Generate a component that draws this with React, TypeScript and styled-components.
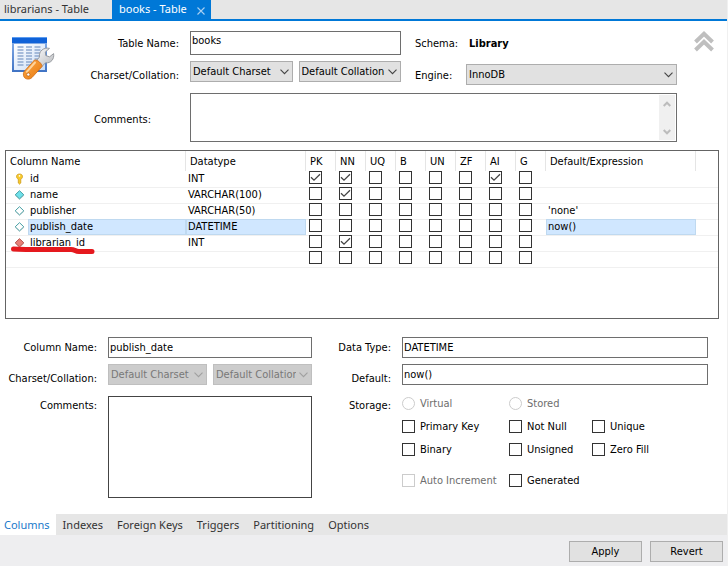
import React from "react";
import styled, { createGlobalStyle, css } from "styled-components";

const GlobalStyle = createGlobalStyle`
  *, *::before, *::after { box-sizing: border-box; }
  body {
    margin: 0;
    background: #f0f0f0;
    color: #000;
    font: 11px/13px "DejaVu Sans Condensed", "Noto Sans", sans-serif;
  }
  button, input, select, textarea { font: inherit; color: inherit; margin: 0; border-radius: 0; }
`;

const Page = styled.main`
  display: flex;
  flex-direction: column;
  min-height: 100vh;
  padding-right: 1px;
`;

/* ---------- editor tabs ---------- */

const EditorTabs = styled.nav`
  display: flex;
  height: 21px;
  background: #e6e6e6;
  border-bottom: 2px solid #0078d7;
  font-family: "Noto Sans", sans-serif;
`;

const EditorTab = styled.div<{ $active?: boolean }>`
  display: flex;
  align-items: center;
  gap: 10px;
  height: 19px;
  padding: 0 5px 2px ${(p) => (p.$active ? "7px" : "4px")};
  min-width: ${(p) => (p.$active ? "99px" : "112px")};
  background: ${(p) => (p.$active ? "#0078d7" : "transparent")};
  color: ${(p) => (p.$active ? "#fff" : "#333")};
`;

const PlainButton = styled.button`
  display: flex;
  padding: 0;
  border: 0;
  background: none;
  white-space: nowrap;
`;

const CloseButton = styled(PlainButton)`
  padding-top: 4px;
`;

/* ---------- shared form parts ---------- */

const fieldBorder = css`
  border: 1px solid #6e6e6e;
  background: #fff;
  outline: none;
`;

const Label = styled.label<{ $top?: number }>`
  align-self: ${(p) => (p.$top ? "start" : "center")};
  padding-top: ${(p) => p.$top ?? 0}px;
  text-align: right;
  white-space: nowrap;
`;

const TextInput = styled.input<{ $tall?: boolean }>`
  ${fieldBorder}
  width: 100%;
  min-width: 0;
  height: ${(p) => (p.$tall ? "24px" : "21px")};
  padding: 0 1px ${(p) => (p.$tall ? "5px" : "1px")};
`;

const Pair = styled.div`
  display: grid;
  grid-template-columns: 1fr 1fr;
  gap: 6px;
  align-self: start;
`;

const SelectBox = styled.div<{ $end?: boolean }>`
  position: relative;
  align-self: ${(p) => (p.$end ? "end" : "start")};
  min-width: 0;
  & > svg {
    position: absolute;
    right: 4px;
    top: 8px;
    pointer-events: none;
  }
`;

const Select = styled.select`
  appearance: none;
  display: block;
  width: 100%;
  height: 21px;
  padding: 0 15px 0 2px;
  border: 1px solid #adadad;
  background: #e1e1e1;
  outline: none;
  text-overflow: clip;
  &:disabled {
    opacity: 1;
    color: #787878;
    border-color: #bfbfbf;
    background: #ccc;
  }
`;

function Dropdown(props: { label: string; value: string; disabled?: boolean; end?: boolean; id?: string }) {
  return (
    <SelectBox $end={props.end}>
      <Select id={props.id} aria-label={props.label} disabled={props.disabled} defaultValue={props.value}>
        <option>{props.value}</option>
      </Select>
      <svg width="9" height="6" viewBox="0 0 9 6" fill="none" stroke={props.disabled ? "#a0a0a0" : "#444"} strokeWidth="1.1">
        <path d="M.5 .7 4.5 4.7 8.5 .7" />
      </svg>
    </SelectBox>
  );
}

const checkMark = `url("data:image/svg+xml,%3Csvg xmlns='http://www.w3.org/2000/svg' viewBox='0 0 11 11'%3E%3Cpath d='M1 5.2 4 8.2 10 2.2' fill='none' stroke='%23444' stroke-width='1.3'/%3E%3C/svg%3E")`;

const Tick = styled.input`
  appearance: none;
  display: block;
  flex: none;
  width: 13px;
  height: 13px;
  border: 1px solid #333;
  border-radius: ${(p) => (p.type === "radio" ? "50%" : "0")};
  background: #fff;
  &:checked { background: #fff ${checkMark} center / 11px 11px no-repeat; }
  &:disabled { border-color: #ccc; }
`;

/* ---------- table header form ---------- */

const HeaderForm = styled.section`
  display: flex;
  padding: 10px 13px 8px 11px;
  background: #fff;
`;

const TableIconBox = styled.div`
  flex: none;
  width: 44px;
  padding-top: 4px;
`;

const HeaderFields = styled.div`
  flex: 1;
  display: grid;
  grid-template-columns: 135px minmax(0, 1fr) 65px minmax(0, 1fr);
  grid-template-rows: 24px 24px auto;
  row-gap: 6px;
  margin-right: 17px;
`;

const LabelCell = styled.div<{ $inset?: boolean }>`
  display: flex;
  align-items: center;
  justify-content: flex-end;
  padding-right: ${(p) => (p.$inset ? "39px" : "11px")};
`;

const LowerLabelCell = styled(LabelCell)`
  padding-top: 5px;
`;

const SideLabelCell = styled.div<{ $low?: boolean }>`
  display: flex;
  align-items: center;
  padding-top: ${(p) => (p.$low ? "5px" : "0")};
  padding-left: 14px;
`;

const SchemaName = styled.output`
  align-self: center;
  padding-left: 3px;
  font-weight: bold;
`;

const CommentBox = styled.div`
  ${fieldBorder}
  grid-column: 2 / -1;
  display: flex;
  height: 49px;
  margin-top: 2px;
  padding: 1px;
`;

const CommentInput = styled.textarea`
  flex: 1;
  min-width: 0;
  border: 0;
  outline: none;
  resize: none;
  overflow: hidden;
`;

const ScrollTrack = styled.div`
  display: flex;
  flex-direction: column;
  justify-content: space-between;
  align-items: center;
  width: 16px;
  padding: 6px 0 5px;
  background: #f0f0f0;
`;

/* ---------- columns table ---------- */

const TableFrame = styled.section`
  padding: 0 8px 0 5px;
  background: #fff;
`;

const TablePane = styled.div`
  min-height: 169px;
  border: 1px solid #646464;
`;

const ColumnsTable = styled.table`
  width: 100%;
  table-layout: fixed;
  border-collapse: separate;
  border-spacing: 0;
`;

const HeadCell = styled.th<{ $last?: boolean }>`
  height: 20px;
  padding: 0 0 0 4px;
  border-right: ${(p) => (p.$last ? "0" : "1px solid #e5e5e5")};
  font-weight: normal;
  text-align: left;
`;

const BodyRow = styled.tr`
  height: 16px;
  &:not(:first-child) { box-shadow: inset 0 1px #f0f0f0; }
  &:last-child { box-shadow: inset 0 1px #f0f0f0, 0 1px #f0f0f0; }
`;

const Cell = styled.td<{ $selected?: boolean }>`
  height: 16px;
  padding: 0 2px;
  line-height: 16px;
  white-space: nowrap;
  ${(p) =>
    p.$selected &&
    css`
      background: #d0e7ff;
      box-shadow: inset 0 0 0 1px #bfd9f0;
    `}
`;

const IconCell = styled.td`
  position: relative;
  padding: 0 0 0 8px;
  & > svg { display: block; }
`;

const TickCell = styled.td`
  padding: 0 0 0 3px;
  vertical-align: top;
`;

const RedMark = styled.svg`
  position: absolute;
  left: 3px;
  top: 8px;
  z-index: 1;
`;

/* ---------- column details form ---------- */

const DetailForm = styled.section`
  flex: 1;
  display: grid;
  grid-template-columns: 97px minmax(0, 204fr) 68px minmax(0, 306fr);
  grid-template-rows: 21px 21px 1fr;
  gap: 6px 11px;
  padding: 18px 19px 16px 0;
  background: #fff;
`;

const DetailComment = styled.textarea`
  ${fieldBorder}
  display: block;
  width: 100%;
  height: 102px;
  margin-top: 5px;
  border-color: #444;
  resize: none;
`;

const Flags = styled.div`
  display: grid;
  grid-template-columns: 107px 83px auto;
  grid-template-rows: repeat(3, 13px) 21px;
  justify-content: start;
  row-gap: 10px;
  padding-top: 6px;
`;

const Flag = styled.label<{ $column: number; $disabled?: boolean }>`
  grid-column: ${(p) => p.$column};
  display: flex;
  align-items: center;
  align-self: end;
  gap: 5px;
  white-space: nowrap;
  color: ${(p) => (p.$disabled ? "#6d6d6d" : "#000")};
`;

/* ---------- bottom bars ---------- */

const PageTabs = styled.nav`
  display: flex;
  height: 21px;
  background: #e6e6e6;
  font-family: "Noto Sans", sans-serif;
`;

const PageTab = styled.button<{ $active?: boolean }>`
  padding: ${(p) => (p.$active ? "0 6px 0 4px" : "0 7px")};
  border: 0;
  text-align: left;
  background: ${(p) => (p.$active ? "#fff" : "transparent")};
  color: ${(p) => (p.$active ? "#1979ca" : "#333")};
`;

const Footer = styled.footer`
  display: flex;
  justify-content: flex-end;
  gap: 8px;
  height: 31px;
  padding: 6px 4px 0;
  background: #eeeef0;
`;

const PushButton = styled.button`
  width: 73px;
  height: 21px;
  padding: 0;
  border: 1px solid #adadad;
  background: #e1e1e1;
`;

/* ---------- drawings ---------- */

function TableIcon() {
  return (
    <svg width="44" height="46" viewBox="0 0 44 46" aria-hidden="true">
      <defs>
        <linearGradient id="frame" x1="0" y1="0" x2="0" y2="1">
          <stop offset="0" stopColor="#8fb5ec" />
          <stop offset="1" stopColor="#3f73c4" />
        </linearGradient>
        <linearGradient id="sheet" x1="0" y1="0" x2="1" y2="1">
          <stop offset="0" stopColor="#fff" />
          <stop offset="1" stopColor="#c9dcf5" />
        </linearGradient>
        <linearGradient id="handle" x1="0" y1="0" x2="1" y2="1">
          <stop offset="0" stopColor="#ffab48" />
          <stop offset="1" stopColor="#e6780f" />
        </linearGradient>
        <linearGradient id="steel" x1="0" y1="0" x2="1" y2="1">
          <stop offset="0" stopColor="#fff" />
          <stop offset="1" stopColor="#b4b6ba" />
        </linearGradient>
      </defs>
      <rect x="1" y="2" width="35" height="35" fill="url(#frame)" />
      <rect x="1" y="2" width="35" height="6" fill="#0f62d8" />
      <rect x="1" y="2" width="35" height="1" fill="#5c9cf0" />
      <rect x="3" y="9" width="31" height="26" fill="url(#sheet)" />
      <g stroke="#8fa9cf" strokeWidth="1.4">
        {[12, 15, 18, 21, 24, 27, 30].map((y) => (
          <path key={y} d={`M6.5 ${y}h6M15 ${y}h6M23.500 ${y}h6`} />
        ))}
      </g>
      <path
        d="M38.500 13.400C33 12 27.500 16 28.500 22L23 28.500 28.500 34 34.500 27.800C40 28.500 43.500 24 42.600 18.600L38.600 21.800 34.800 20.600 34.300 17Z"
        fill="url(#steel)"
        stroke="#909398"
        strokeWidth=".9"
        strokeLinejoin="round"
      />
      <path d="M23.500 25C26.500 24.500 31 28.500 31 31.500L21 42.500C18 45.500 13 44 12.500 40.500 12 38 13 36.500 14 35.500Z" fill="url(#handle)" stroke="#cf6a10" strokeWidth=".8" />
      <path d="M24 27.500 15.800 36.800" stroke="#ffd39a" strokeWidth="2" strokeLinecap="round" />
      <circle cx="17.300" cy="39.500" r="1.600" fill="#fff" stroke="#a9530a" strokeWidth=".6" />
    </svg>
  );
}

type Kind = "key" | "filled" | "open" | "foreign";

function RowIcon({ kind }: { kind: Kind }) {
  if (kind === "key") {
    return (
      <svg width="11" height="12" viewBox="0 0 11 12" aria-label="primary key">
        <path d="M5.5 1C3.5 1 2.500 2 2.500 3.500S3.500 5.800 4.300 6.200V10L5.500 11.200 6.800 10V6.200C7.600 5.800 8.500 5 8.500 3.500S7.500 1 5.500 1Z" fill="#f7c92c" stroke="#c99410" strokeWidth=".7" />
        <circle cx="5.500" cy="2.900" r=".8" fill="#fff" />
      </svg>
    );
  }
  const fill = { filled: "#6fe0ea", open: "#fff", foreign: "#e88078" }[kind];
  const line = kind === "foreign" ? "#b5534d" : "#469fa4";
  return (
    <svg width="11" height="12" viewBox="0 0 11 12" aria-hidden="true">
      <path d="M5.500 2.500 10.300 6.500 5.500 10.800 1 6.500Z" fill="#bbb" opacity=".6" />
      <path d="M5.500 1.700 9.800 5.800 5.500 9.900 1.200 5.800Z" fill={fill} stroke={line} />
    </svg>
  );
}

/* ---------- data ---------- */

const FLAG_NAMES = ["PK", "NN", "UQ", "B", "UN", "ZF", "AI", "G"];

interface ColumnInfo {
  name: string;
  type: string;
  kind?: Kind;
  flags: string[];
  value?: string;
  selected?: boolean;
  marked?: boolean;
}

const COLUMNS: ColumnInfo[] = [
  { name: "id", type: "INT", kind: "key", flags: ["PK", "NN", "AI"] },
  { name: "name", type: "VARCHAR(100)", kind: "filled", flags: ["NN"] },
  { name: "publisher", type: "VARCHAR(50)", kind: "open", flags: [], value: "'none'" },
  { name: "publish_date", type: "DATETIME", kind: "open", flags: [], value: "now()", selected: true },
  { name: "librarian_id", type: "INT", kind: "foreign", flags: ["NN"], marked: true },
  { name: "", type: "", flags: [] },
];

const OPTIONS: { name: string; column: number; disabled?: boolean; radio?: boolean }[] = [
  { name: "Virtual", column: 1, disabled: true, radio: true },
  { name: "Stored", column: 2, disabled: true, radio: true },
  { name: "Primary Key", column: 1 },
  { name: "Not Null", column: 2 },
  { name: "Unique", column: 3 },
  { name: "Binary", column: 1 },
  { name: "Unsigned", column: 2 },
  { name: "Zero Fill", column: 3 },
  { name: "Auto Increment", column: 1, disabled: true },
  { name: "Generated", column: 2 },
];

const PAGES = ["Columns", "Indexes", "Foreign Keys", "Triggers", "Partitioning", "Options"];

export default function App() {
  return (
    <>
      <GlobalStyle />
      <Page>
        <EditorTabs>
          <EditorTab>
            <PlainButton>librarians - Table</PlainButton>
          </EditorTab>
          <EditorTab $active>
            <PlainButton>books - Table</PlainButton>
            <CloseButton aria-label="Close tab">
              <svg width="8" height="8" viewBox="0 0 8 8" stroke="#a8d0f2" strokeWidth="1.1">
                <path d="M.5 .5 7.5 7.5M7.5 .5 .5 7.5" />
              </svg>
            </CloseButton>
          </EditorTab>
        </EditorTabs>

        <HeaderForm>
          <TableIconBox>
            <TableIcon />
          </TableIconBox>
          <HeaderFields>
            <LabelCell>
              <Label htmlFor="table-name">Table Name:</Label>
            </LabelCell>
            <TextInput id="table-name" $tall defaultValue="books" />
            <SideLabelCell>
              <Label htmlFor="schema">Schema:</Label>
            </SideLabelCell>
            <SchemaName id="schema">Library</SchemaName>

            <LowerLabelCell>
              <Label htmlFor="charset">Charset/Collation:</Label>
            </LowerLabelCell>
            <Pair>
              <Dropdown id="charset" label="Charset" value="Default Charset" />
              <Dropdown label="Collation" value="Default Collation" />
            </Pair>
            <SideLabelCell $low>
              <Label htmlFor="engine">Engine:</Label>
            </SideLabelCell>
            <Dropdown id="engine" label="Engine" value="InnoDB" end />

            <LowerLabelCell $inset>
              <Label htmlFor="comments">Comments:</Label>
            </LowerLabelCell>
            <CommentBox>
              <CommentInput id="comments" />
              <ScrollTrack>
                <PlainButton aria-label="Scroll up">
                  <svg width="8" height="6" viewBox="0 0 8 6" fill="none" stroke="#bcbcbc" strokeWidth="2">
                    <path d="M.7 5 4 1.700 7.300 5" />
                  </svg>
                </PlainButton>
                <PlainButton aria-label="Scroll down">
                  <svg width="8" height="6" viewBox="0 0 8 6" fill="none" stroke="#bcbcbc" strokeWidth="2">
                    <path d="M.7 1 4 4.300 7.300 1" />
                  </svg>
                </PlainButton>
              </ScrollTrack>
            </CommentBox>
          </HeaderFields>
          <PlainButton aria-label="Collapse header">
            <svg width="20" height="21" viewBox="0 0 20 21" fill="none" stroke="#bfbfbf" strokeWidth="4">
              <path d="M1.500 11 10 2.800 18.500 11M1.500 19 10 10.800 18.500 19" />
            </svg>
          </PlainButton>
        </HeaderForm>

        <TableFrame>
          <TablePane>
            <ColumnsTable>
              <colgroup>
                <col width="22" />
                <col width="158" />
                <col width="120" />
                {FLAG_NAMES.map((f) => (
                  <col key={f} width="30" />
                ))}
                <col width="150" />
                <col />
              </colgroup>
              <thead>
                <tr>
                  <HeadCell colSpan={2}>Column Name</HeadCell>
                  <HeadCell>Datatype</HeadCell>
                  {FLAG_NAMES.map((f) => (
                    <HeadCell key={f}>{f}</HeadCell>
                  ))}
                  <HeadCell>Default/Expression</HeadCell>
                  <HeadCell $last aria-hidden="true" />
                </tr>
              </thead>
              <tbody>
                {COLUMNS.map((c) => (
                  <BodyRow key={c.name}>
                    <IconCell>
                      {c.kind && <RowIcon kind={c.kind} />}
                      {c.marked && (
                        <RedMark width="88" height="12" viewBox="0 0 88 12" fill="none" stroke="#e5191e" strokeWidth="5" strokeLinecap="round" strokeLinejoin="round">
                          <path d="M4.500 6C20 7 42 6.500 62 6.500 66 6.500 66 8.500 70 8.500H83" />
                        </RedMark>
                      )}
                    </IconCell>
                    <Cell $selected={c.selected}>{c.name}</Cell>
                    <Cell $selected={c.selected}>{c.type}</Cell>
                    {FLAG_NAMES.map((f) => (
                      <TickCell key={f}>
                        <Tick type="checkbox" aria-label={`${c.name} ${f}`} defaultChecked={c.flags.includes(f)} />
                      </TickCell>
                    ))}
                    <Cell $selected={c.selected}>{c.value}</Cell>
                    <td />
                  </BodyRow>
                ))}
              </tbody>
            </ColumnsTable>
          </TablePane>
        </TableFrame>

        <DetailForm>
          <Label htmlFor="column-name">Column Name:</Label>
          <TextInput id="column-name" defaultValue="publish_date" />
          <Label htmlFor="data-type">Data Type:</Label>
          <TextInput id="data-type" defaultValue="DATETIME" />

          <Label htmlFor="column-charset" $top={8}>
            Charset/Collation:
          </Label>
          <Pair>
            <Dropdown id="column-charset" label="Column charset" value="Default Charset" disabled />
            <Dropdown label="Column collation" value="Default Collation" disabled />
          </Pair>
          <Label htmlFor="default" $top={8}>
            Default:
          </Label>
          <TextInput id="default" defaultValue="now()" />

          <Label htmlFor="column-comments" $top={8}>
            Comments:
          </Label>
          <DetailComment id="column-comments" />
          <Label as="span" id="storage" $top={8}>
            Storage:
          </Label>
          <Flags role="group" aria-labelledby="storage">
            {OPTIONS.map((o) => (
              <Flag key={o.name} $column={o.column} $disabled={o.disabled}>
                <Tick type={o.radio ? "radio" : "checkbox"} name={o.radio ? "storage" : undefined} disabled={o.disabled} />
                {o.name}
              </Flag>
            ))}
          </Flags>
        </DetailForm>

        <PageTabs>
          {PAGES.map((p, i) => (
            <PageTab key={p} $active={i === 0}>
              {p}
            </PageTab>
          ))}
        </PageTabs>
        <Footer>
          <PushButton>Apply</PushButton>
          <PushButton>Revert</PushButton>
        </Footer>
      </Page>
    </>
  );
}
